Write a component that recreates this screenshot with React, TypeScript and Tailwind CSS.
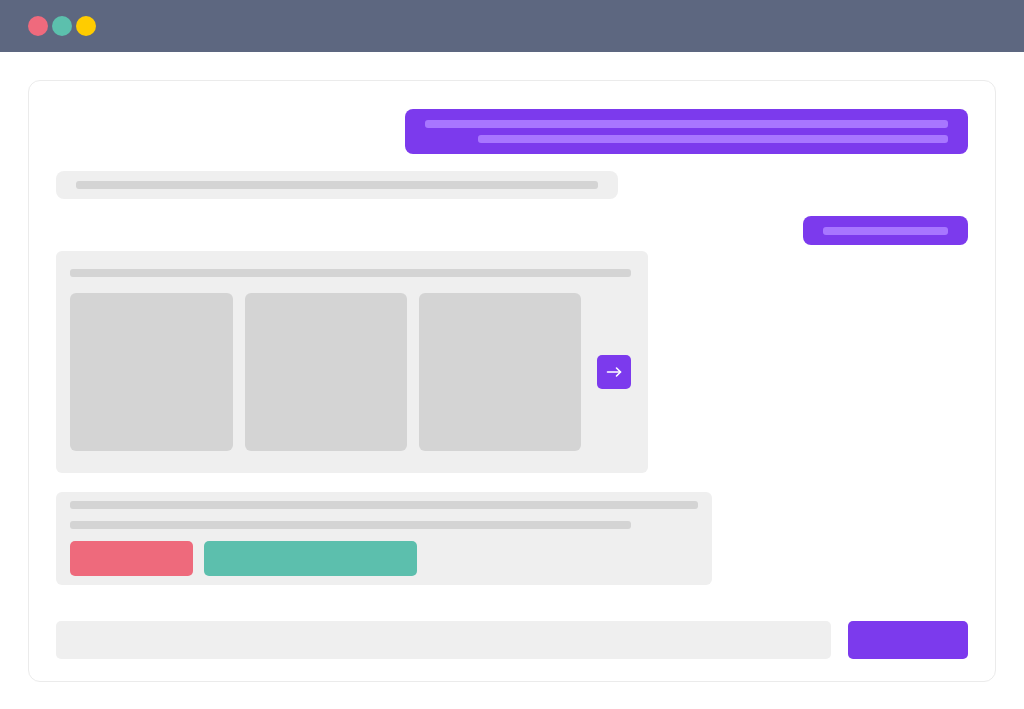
function Bar({ className }: { className: string }) {
    return <div className={`h-[8px] rounded-[3px] ${className}`} />;
}

function NextArrow() {
    return (
        <svg width="16" height="16" viewBox="0 0 16 16" fill="none" stroke="currentColor" strokeWidth="1.6" strokeLinecap="round" strokeLinejoin="round">
            <path d="M1.5 8H14.5" />
            <path d="M10.5 4L14.5 8L10.5 12" />
        </svg>
    );
}

export default function App() {
    return (
        <div className="min-h-[709px] bg-white font-['Liberation_Sans',sans-serif]">
            {/* window chrome */}
            <div className="h-[52px] bg-[#5d6780] flex items-center gap-[4px] pl-[28px] pb-[1px]">
                <span className="w-[20px] h-[20px] rounded-full bg-[#ef6a7d]" />
                <span className="w-[20px] h-[20px] rounded-full bg-[#5cc0ad]" />
                <span className="w-[20px] h-[20px] rounded-full bg-[#ffcc00]" />
            </div>

            <div className="mx-[28px] mt-[28px] border border-[#ebebeb] rounded-[12px] pt-[28px] px-[27px] pb-[22px] flex flex-col">
                {/* outgoing message, two lines */}
                <div className="self-end w-[563px] h-[45px] rounded-[8px] bg-[#7c3aed] px-[20px] pt-[11px] flex flex-col gap-[7px]">
                    <Bar className="bg-[#a876ff] w-full" />
                    <Bar className="bg-[#a876ff] w-[470px] self-end" />
                </div>

                {/* incoming message */}
                <div className="mt-[17px] w-[562px] h-[28px] rounded-[8px] bg-[#efefef] px-[20px] flex items-center">
                    <Bar className="bg-[#d4d4d4] w-full" />
                </div>

                {/* short outgoing message */}
                <div className="mt-[17px] self-end w-[165px] h-[29px] rounded-[8px] bg-[#7c3aed] px-[20px] flex items-center">
                    <Bar className="bg-[#a876ff] w-full" />
                </div>

                {/* carousel block */}
                <div className="mt-[6px] w-[592px] rounded-[6px] bg-[#efefef] pt-[18px] pl-[14px] pr-[17px] pb-[22px]">
                    <Bar className="bg-[#d4d4d4] w-[561px]" />
                    <div className="mt-[16px] flex items-center">
                        <div className="flex gap-[12px]">
                            <div className="w-[163px] h-[158px] rounded-[6px] bg-[#d4d4d4]" />
                            <div className="w-[162px] h-[158px] rounded-[6px] bg-[#d4d4d4]" />
                            <div className="w-[162px] h-[158px] rounded-[6px] bg-[#d4d4d4]" />
                        </div>
                        <button className="ml-[16px] w-[34px] h-[34px] rounded-[5px] bg-[#7c3aed] flex items-center justify-center text-white">
                            <NextArrow />
                        </button>
                    </div>
                </div>

                {/* text block with actions */}
                <div className="mt-[19px] w-[656px] rounded-[6px] bg-[#efefef] pt-[9px] px-[14px] pb-[9px] flex flex-col">
                    <Bar className="bg-[#d4d4d4] w-[628px]" />
                    <Bar className="bg-[#d4d4d4] w-[561px] mt-[12px]" />
                    <div className="mt-[12px] flex gap-[11px]">
                        <div className="w-[123px] h-[35px] rounded-[5px] bg-[#ee6a7c]" />
                        <div className="w-[213px] h-[35px] rounded-[5px] bg-[#5cbfad]" />
                    </div>
                </div>

                {/* composer */}
                <div className="mt-[36px] flex gap-[17px]">
                    <div className="flex-1 h-[38px] rounded-[5px] bg-[#efefef]" />
                    <div className="w-[120px] h-[38px] rounded-[5px] bg-[#7c3aed]" />
                </div>
            </div>
        </div>
    );
}
